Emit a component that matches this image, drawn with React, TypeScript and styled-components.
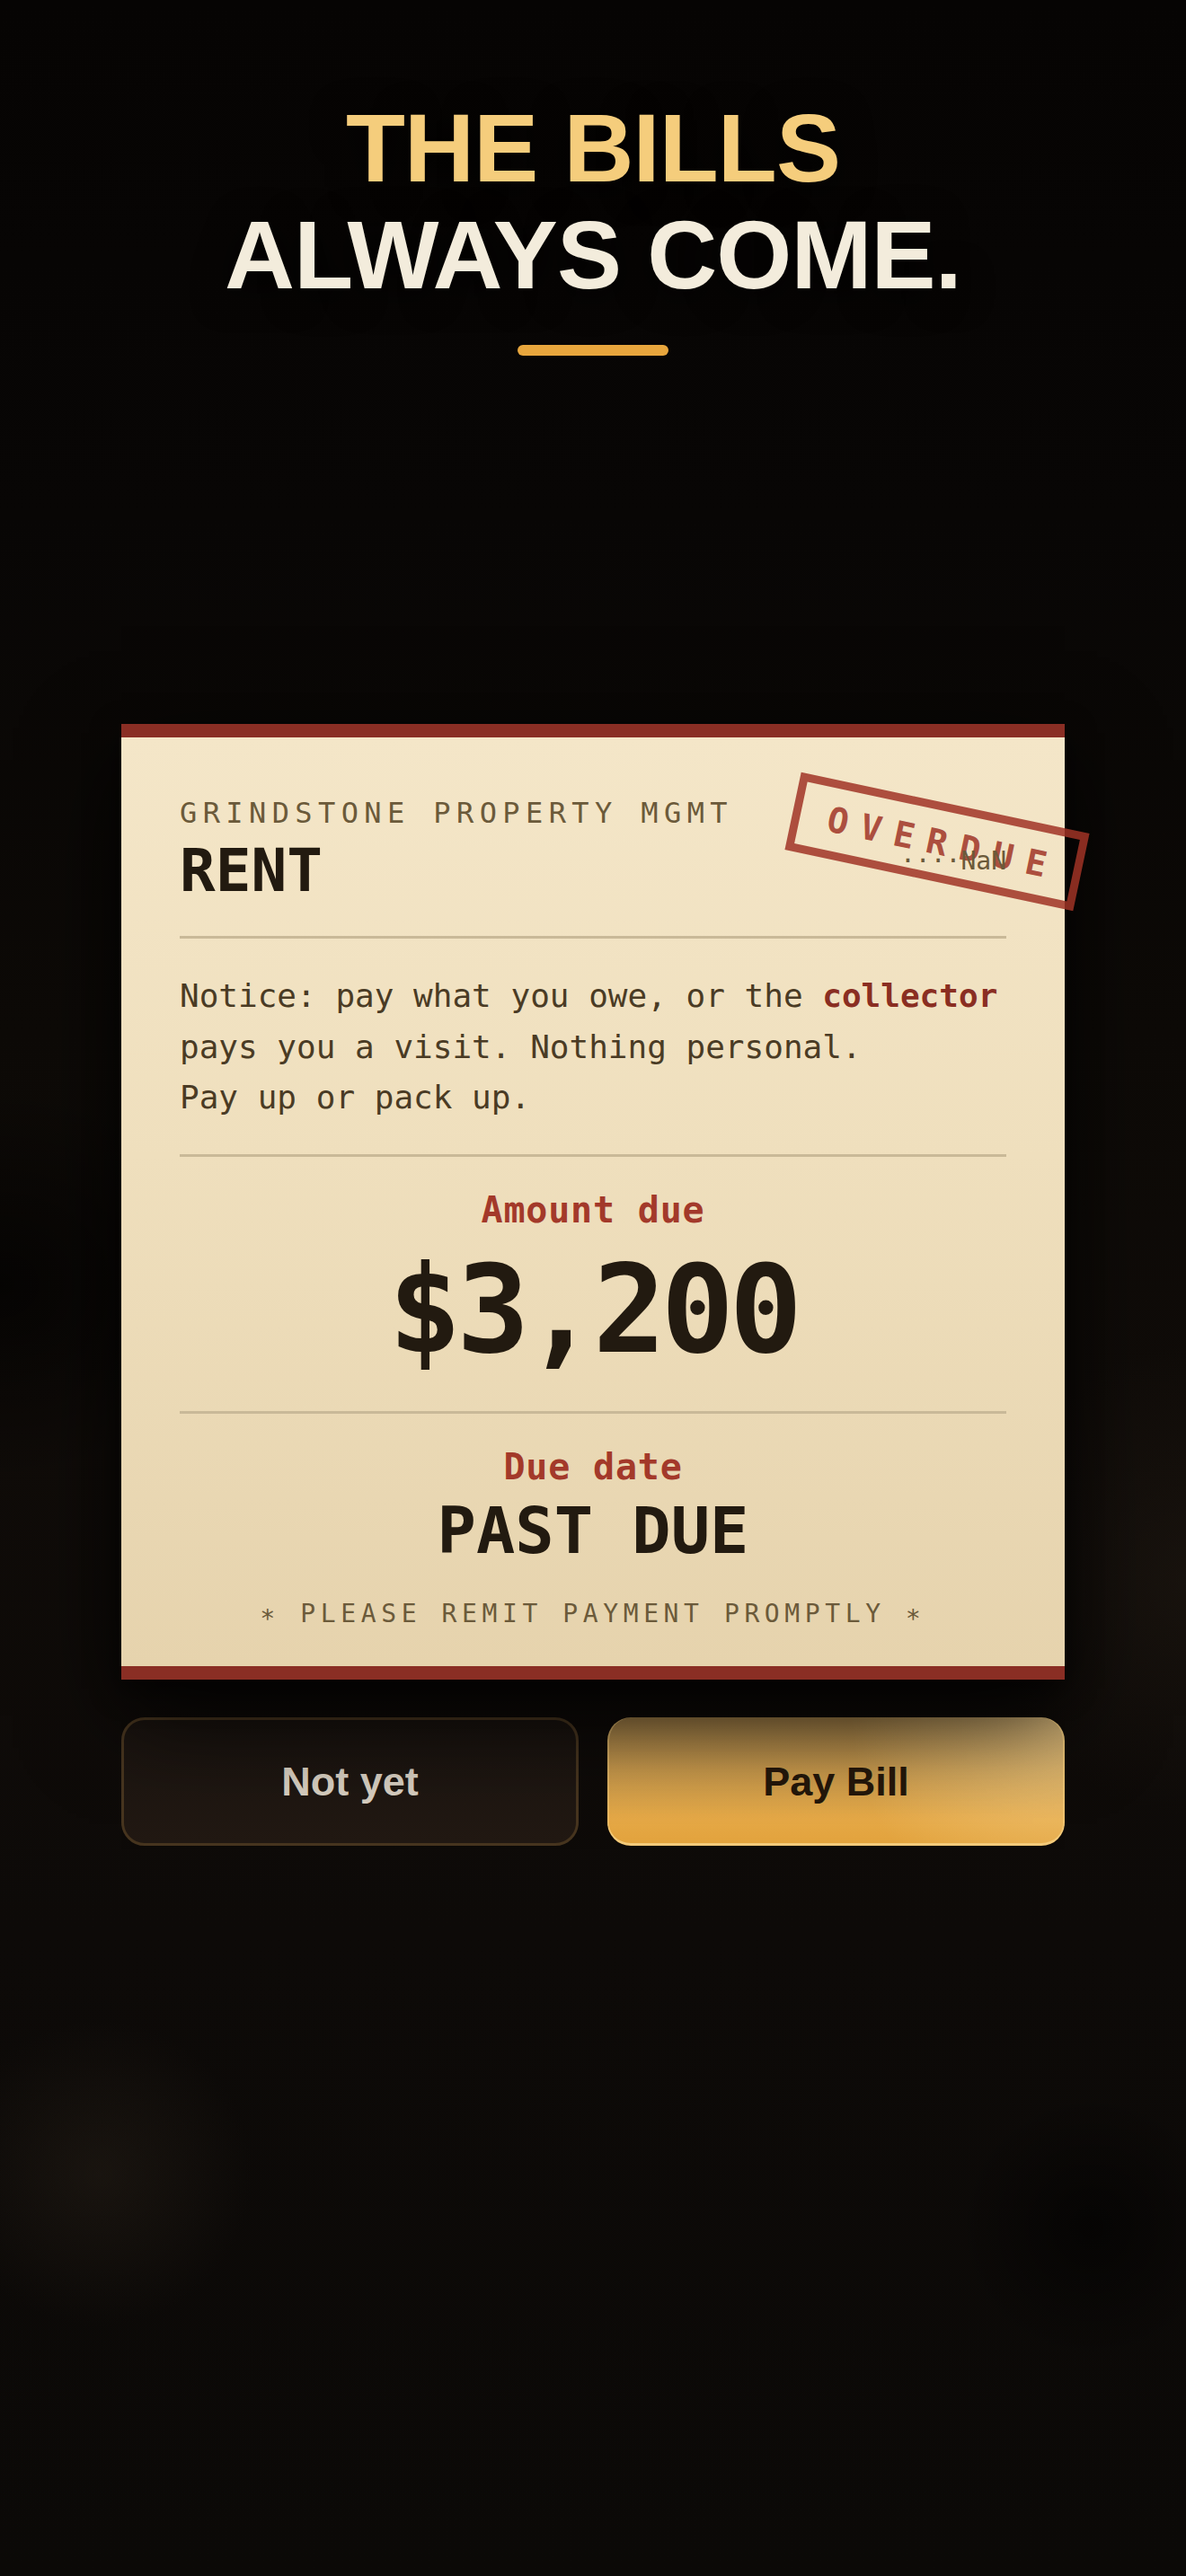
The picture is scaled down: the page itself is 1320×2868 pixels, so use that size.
import React from "react";
import styled, { createGlobalStyle } from "styled-components";

const GlobalStyle = createGlobalStyle`
  * { box-sizing: border-box; }
  html, body { margin: 0; padding: 0; background: #0a0806; }
  #root { min-height: 100vh; }
`;

const mono = `"DejaVu Sans Mono", "Liberation Mono", monospace`;
const sans = `"Liberation Sans", Arial, sans-serif`;

const Page = styled.div`
  height: 100vh;
  display: grid;
  grid-template-rows: 1fr auto 1fr;
  background:
    radial-gradient(circle at 110px 2420px, rgba(44, 36, 27, 0.4) 0, rgba(44, 36, 27, 0) 170px),
    radial-gradient(circle at 1215px 2480px, rgba(0, 0, 0, 0.55) 0, rgba(0, 0, 0, 0) 150px),
    radial-gradient(ellipse 260px 220px at 0px 1430px, rgba(0, 0, 0, 0.6) 0, rgba(0, 0, 0, 0) 100%),
    radial-gradient(ellipse 220px 260px at 1320px 1760px, rgba(34, 27, 20, 0.5) 0, rgba(34, 27, 20, 0) 100%),
    linear-gradient(180deg, #060403 0%, #080605 20%, #0d0a07 40%, #100c09 55%, #0d0a08 75%, #0b0907 100%);
  font-family: ${sans};
`;

const Header = styled.header`
  align-self: start;
  padding-top: 106px;
  display: flex;
  flex-direction: column;
  align-items: center;
`;

const Title = styled.h1`
  margin: 0;
  font-family: ${sans};
  font-weight: 700;
  font-size: 108px;
  line-height: 1.1;
  letter-spacing: -0.008em;
  text-align: center;
  text-shadow: 0 6px 40px rgba(0, 0, 0, 0.9);
`;

const TitleLine = styled.span<{ $tone: "gold" | "cream" }>`
  display: block;
  color: ${(p) => (p.$tone === "gold" ? "#f5cd7c" : "#f3ecdc")};
`;

const Underline = styled.div`
  margin-top: 40px;
  width: 168px;
  height: 12px;
  border-radius: 6px;
  background: #e8a63d;
`;

const Main = styled.main`
  display: flex;
  flex-direction: column;
  align-items: center;
  padding-bottom: 7px;
`;

const Bill = styled.section`
  position: relative;
  width: 1050px;
  padding: 65px 65px 41px;
  background: linear-gradient(180deg, #f4e6c8 0%, #efdfbd 45%, #e6d3ad 100%);
  border-top: 15px solid #8a2e24;
  border-bottom: 15px solid #8a2e24;
  box-shadow: 0 40px 100px rgba(0, 0, 0, 0.75), 0 10px 30px rgba(0, 0, 0, 0.5);
  font-family: ${mono};
`;

const Stamp = styled.div`
  position: absolute;
  top: 72px;
  right: -22px;
  width: 328px;
  height: 88px;
  border: 9px solid rgba(160, 52, 38, 0.85);
  transform: rotate(12deg);
  display: flex;
  align-items: center;
  justify-content: center;
  padding-left: 14px;
  font-family: ${mono};
  font-weight: 700;
  font-size: 39px;
  letter-spacing: 0.36em;
  color: rgba(160, 52, 38, 0.85);
  z-index: 1;
`;

const Head = styled.div`
  position: relative;
  z-index: 2;
  display: flex;
  justify-content: space-between;
  align-items: flex-end;
  padding-bottom: 36px;
  border-bottom: 3px solid #c9b998;
`;

const HeadLeft = styled.div`
  display: flex;
  flex-direction: column;
  gap: 10px;
`;

const Issuer = styled.div`
  font-size: 32px;
  line-height: 38px;
  letter-spacing: 0.2em;
  color: #6b5a3a;
`;

const Kind = styled.div`
  font-size: 66px;
  line-height: 1.1;
  font-weight: 700;
  color: #221a10;
`;

const Ref = styled.div`
  font-size: 28px;
  line-height: 34px;
  color: #6b5a3a;
  padding-bottom: 30px;
`;

const Notice = styled.p`
  margin: 0;
  padding: 36px 0 34px;
  font-size: 36px;
  line-height: 56.5px;
  color: #4a3b24;
  border-bottom: 3px solid #c9b998;
`;

const Strong = styled.strong`
  color: #8a2e22;
  font-weight: 700;
`;

const Block = styled.div<{ $last?: boolean }>`
  display: flex;
  flex-direction: column;
  align-items: center;
  padding: 35px 0 ${(p) => (p.$last ? "0" : "37px")};
  border-bottom: ${(p) => (p.$last ? "none" : "3px solid #c9b998")};
`;

const FieldLabel = styled.div`
  font-size: 40px;
  line-height: 48px;
  font-weight: 700;
  letter-spacing: 0.02em;
  color: #a3392a;
`;

const Amount = styled.div`
  margin-top: 13px;
  font-size: 135px;
  line-height: 150px;
  font-weight: 700;
  letter-spacing: -0.04em;
  font-variant-numeric: slashed-zero;
  font-feature-settings: "zero" 1;
  color: #221a10;
`;

const DueValue = styled.div`
  margin-top: 8px;
  font-size: 72px;
  line-height: 1.1;
  font-weight: 700;
  color: #221a10;
`;

const Footer = styled.div`
  margin-top: 36px;
  text-align: center;
  font-size: 28px;
  line-height: 34px;
  letter-spacing: 0.2em;
  color: #6b5a3a;
`;

const Actions = styled.div`
  margin-top: 42px;
  width: 1050px;
  display: grid;
  grid-template-columns: 1fr 1fr;
  gap: 32px;
`;

const Button = styled.button<{ $primary?: boolean }>`
  height: 143px;
  border-radius: 26px;
  font-family: ${sans};
  font-weight: 700;
  font-size: 45px;
  cursor: pointer;
  ${(p) =>
    p.$primary
      ? `
    color: #24170a;
    border: none;
    background:
      radial-gradient(circle at 100% 0%, rgba(255, 232, 175, 0.4) 0, rgba(255, 232, 175, 0) 45%),
      linear-gradient(180deg, rgba(42, 32, 22, 0.45) 0%, rgba(42, 32, 22, 0.2) 40%, rgba(42, 32, 22, 0) 80%),
      linear-gradient(180deg, #f2c06a 0%, #e3a33d 100%);
    box-shadow: inset 0 -3px 0 #f4cb7b, inset 2px 0 0 rgba(244, 203, 123, 0.5), inset -2px 0 0 rgba(244, 203, 123, 0.6);
  `
      : `
    color: #d8cfc1;
    border: 3px solid #47351f;
    background: linear-gradient(180deg, #19130f 0%, #221913 100%);
  `}
`;

export default function App() {
  return (
    <>
      <GlobalStyle />
      <Page>
        <Header>
          <Title>
            <TitleLine $tone="gold">THE BILLS</TitleLine>
            <TitleLine $tone="cream">ALWAYS COME.</TitleLine>
          </Title>
          <Underline />
        </Header>
        <Main>
          <Bill>
            <Stamp>OVERDUE</Stamp>
            <Head>
              <HeadLeft>
                <Issuer>GRINDSTONE PROPERTY MGMT</Issuer>
                <Kind>RENT</Kind>
              </HeadLeft>
              <Ref>····NaN</Ref>
            </Head>
            <Notice>
              Notice: pay what you owe, or the <Strong>collector</Strong> pays you a visit. Nothing personal.
              <br />
              Pay up or pack up.
            </Notice>
            <Block>
              <FieldLabel>Amount due</FieldLabel>
              <Amount>$3,200</Amount>
            </Block>
            <Block $last>
              <FieldLabel>Due date</FieldLabel>
              <DueValue>PAST DUE</DueValue>
            </Block>
            <Footer>∗ PLEASE REMIT PAYMENT PROMPTLY ∗</Footer>
          </Bill>
          <Actions>
            <Button>Not yet</Button>
            <Button $primary>Pay Bill</Button>
          </Actions>
        </Main>
        <div />
      </Page>
    </>
  );
}
